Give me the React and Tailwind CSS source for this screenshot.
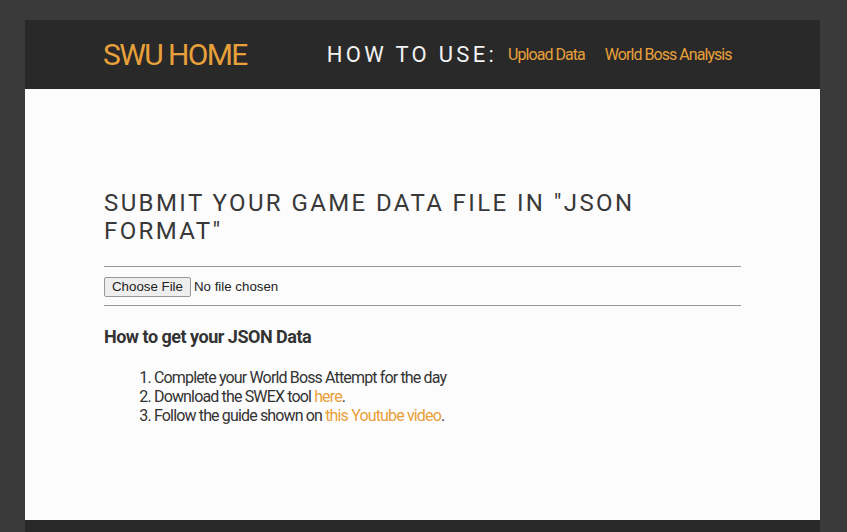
export default function App() {
  return (
    <div className="min-h-[532px] bg-[#3a3a3a] pt-5 font-['Roboto',sans-serif]">
      <div className="ml-[25px] w-[795px]">
        {/* HEADER */}
        <header className="h-[69px] bg-[#292929] flex items-center pl-[78px]">
          <a className="text-[30px] tracking-[-1.6px] text-[#e8a03a] leading-none">SWU HOME</a>
          <span className="ml-[80px] text-[22px] tracking-[0.15em] text-[#f2f2f2] leading-none">HOW TO USE:</span>
          <nav className="ml-[11px] flex gap-5 text-[16px] tracking-[-0.95px] text-[#e8a03a]">
            <a>Upload Data</a>
            <a>World Boss Analysis</a>
          </nav>
        </header>

        {/* CONTENT */}
        <main className="h-[431px] bg-[#fcfcfc] px-[79px] pt-[100px]">
          <h1 className="text-[24px] leading-[28px] tracking-[0.1em] text-[#383838] font-normal">
            SUBMIT YOUR GAME DATA FILE IN "JSON FORMAT"
          </h1>
          <div className="mt-[21px] border-t border-b border-[#999] pt-[10px] pb-[8px]">
            <input type="file" className="block text-[13.3px] leading-[18px] font-['Liberation_Sans',sans-serif] text-[#222] file:px-[7px] file:py-0 file:mr-[3px] file:border file:border-[#999] file:rounded-[2px] file:bg-[#eee] file:text-[#222]" />
          </div>
          <h3 className="mt-[17px] text-[18px] font-bold text-[#333] tracking-[-0.5px]">How to get your JSON Data</h3>
          <ol className="mt-[18px] pl-[50px] list-decimal text-[16px] leading-[19px] text-[#333] tracking-[-0.85px]">
            <li>Complete your World Boss Attempt for the day</li>
            <li>Download the SWEX tool <a className="text-[#e8a03a]">here</a>.</li>
            <li>Follow the guide shown on <a className="text-[#e8a03a]">this Youtube video</a>.</li>
          </ol>
        </main>

        {/* FOOTER */}
        <footer className="h-[12px] bg-[#292929]" />
      </div>
    </div>
  );
}
